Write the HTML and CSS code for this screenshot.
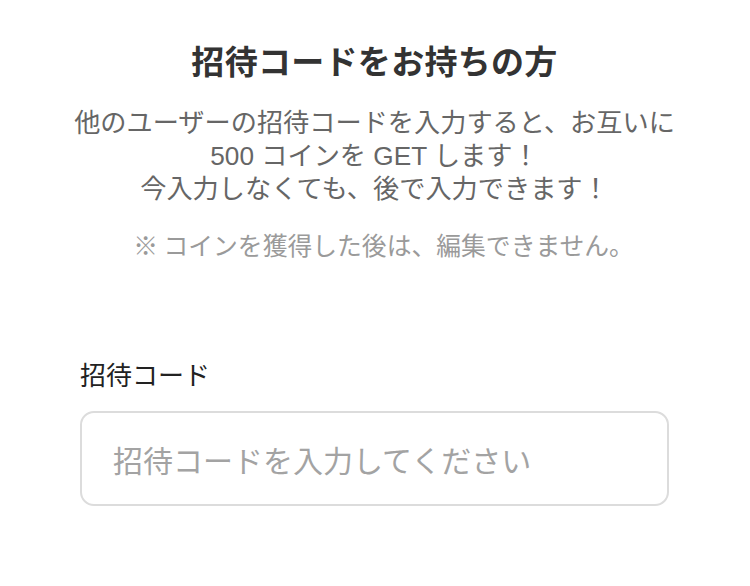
FILE: index.html
```html
<!DOCTYPE html>
<html lang="ja">
<head>
<meta charset="utf-8">
<title>招待コード</title>
<link rel="stylesheet" href="styles.css">
</head>
<body>
<main class="page">
  <h1 class="title">招待コードをお持ちの方</h1>
  <p class="lead">他のユーザーの招待コードを入力すると、お互いに<br>500 コインを GET します！<br>今入力しなくても、後で入力できます！</p>
  <p class="note">※ コインを獲得した後は、編集できません。</p>
  <label class="field">
    <span class="field-label">招待コード</span>
    <input class="field-input" type="text" placeholder="招待コードを入力してください">
  </label>
</main>
</body>
</html>
```

FILE: styles.css
```css
* { box-sizing: border-box; }
html, body {
  margin: 0;
  padding: 0;
  background: #fff;
}
body {
  font-family: "Noto Sans CJK JP", "Noto Sans", sans-serif;
  width: 750px;
  height: 586px;
  overflow: hidden;
}
.page {
  display: flex;
  flex-direction: column;
  padding: 40px 81px 0 80px;
}
.title {
  margin: 0;
  font-size: 33px;
  line-height: 40px;
  font-weight: 700;
  color: #333;
  text-align: center;
  letter-spacing: 0.3px;
}
.lead {
  margin: 27px -20px 0;
  font-family: "Liberation Sans", "Noto Sans CJK JP", sans-serif;
  font-size: 26.2px;
  line-height: 33px;
  color: #666;
  text-align: center;
}
.note {
  margin: 23px -20px 0;
  padding-left: 18px;
  font-size: 24.8px;
  line-height: 30px;
  color: #9a9a9a;
  text-align: center;
}
.field {
  display: flex;
  flex-direction: column;
  margin-top: 100px;
}
.field-label {
  font-size: 26px;
  line-height: 30px;
  color: #222;
}
.field-input {
  margin-top: 22px;
  width: 100%;
  height: 95px;
  border: 2px solid #dcdcdc;
  border-radius: 14px;
  padding: 0 31px;
  font-family: inherit;
  font-size: 30px;
  color: #333;
  outline: none;
  background: #fff;
}
.field-input::placeholder {
  color: #a3a3a3;
}
```
